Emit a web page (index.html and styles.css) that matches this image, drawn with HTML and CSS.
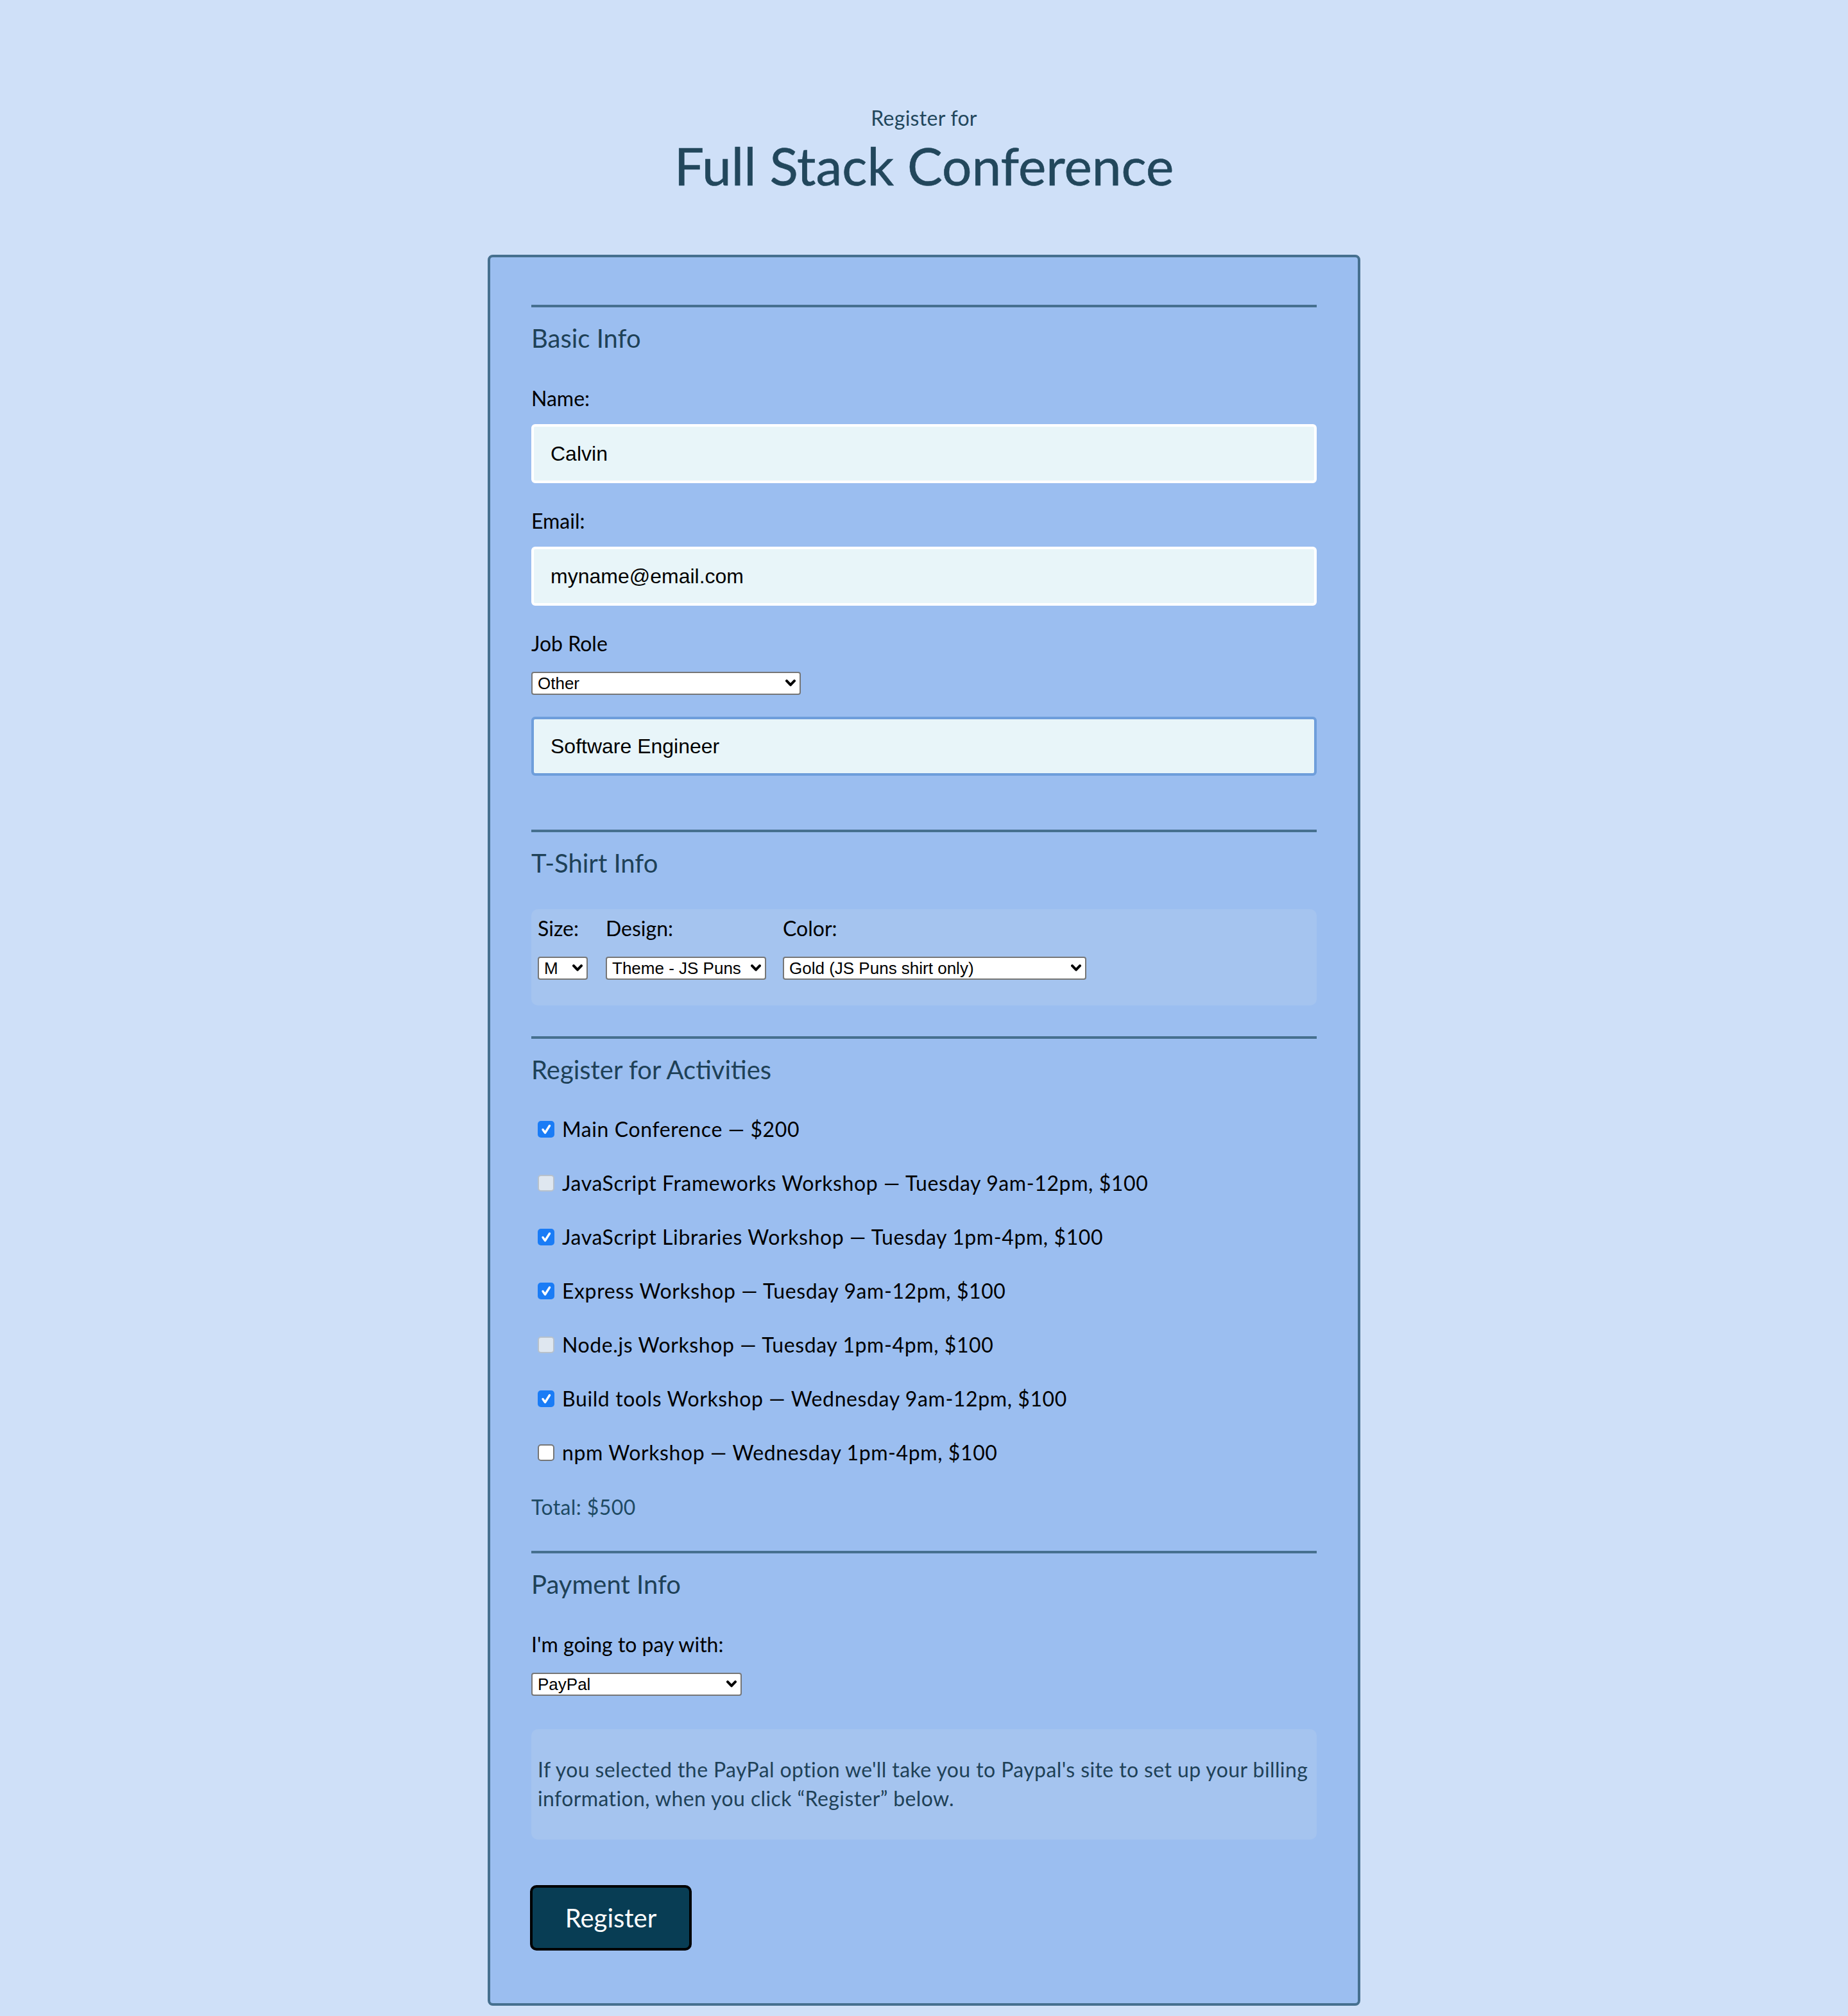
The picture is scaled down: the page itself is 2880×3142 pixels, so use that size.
FILE: index.html
```html
<!DOCTYPE html>
<html lang="en">
<head>
<meta charset="utf-8">
<title>Full Stack Conference</title>
<link rel="stylesheet" href="styles.css">
</head>
<body>
<header class="page-header">
  <p class="kicker">Register for</p>
  <h1 class="title">Full Stack Conference</h1>
</header>

<form class="reg-form">
  <section class="section basic-section">
    <h2 class="section-title">Basic Info</h2>
    <label class="field-label">Name:</label>
    <input class="text-input" type="text" value="Calvin">
    <label class="field-label gap-top">Email:</label>
    <input class="text-input" type="text" value="myname@email.com">
    <label class="field-label gap-top">Job Role</label>
    <div class="select-row">
      <span class="select-wrap w-job">
        <select class="select"><option>Other</option></select>
        <svg class="chev" viewBox="0 0 12 8"><path d="M1.5 1.5 L6 6.2 L10.5 1.5" fill="none" stroke="#000" stroke-width="3" stroke-linecap="round" stroke-linejoin="round"/></svg>
      </span>
    </div>
    <input class="text-input focused" type="text" value="Software Engineer">
  </section>

  <section class="section">
    <h2 class="section-title">T-Shirt Info</h2>
    <div class="panel shirt-panel">
      <div class="shirt-col">
        <label class="field-label">Size:</label>
        <span class="select-wrap w-size">
          <select class="select"><option>M</option></select>
          <svg class="chev" viewBox="0 0 12 8"><path d="M1.5 1.5 L6 6.2 L10.5 1.5" fill="none" stroke="#000" stroke-width="3" stroke-linecap="round" stroke-linejoin="round"/></svg>
        </span>
      </div>
      <div class="shirt-col">
        <label class="field-label">Design:</label>
        <span class="select-wrap w-design">
          <select class="select"><option>Theme - JS Puns</option></select>
          <svg class="chev" viewBox="0 0 12 8"><path d="M1.5 1.5 L6 6.2 L10.5 1.5" fill="none" stroke="#000" stroke-width="3" stroke-linecap="round" stroke-linejoin="round"/></svg>
        </span>
      </div>
      <div class="shirt-col">
        <label class="field-label">Color:</label>
        <span class="select-wrap w-color">
          <select class="select"><option>Gold (JS Puns shirt only)</option></select>
          <svg class="chev" viewBox="0 0 12 8"><path d="M1.5 1.5 L6 6.2 L10.5 1.5" fill="none" stroke="#000" stroke-width="3" stroke-linecap="round" stroke-linejoin="round"/></svg>
        </span>
      </div>
    </div>
  </section>

  <section class="section">
    <h2 class="section-title">Register for Activities</h2>
    <ul class="activities">
      <li class="activity"><span class="cb checked"><svg viewBox="0 0 26 26"><path d="M8 13.5 L11.5 18.5 L18.5 7.5" fill="none" stroke="#fff" stroke-width="3.4" stroke-linecap="round" stroke-linejoin="round"/></svg></span>Main Conference — $200</li>
      <li class="activity"><span class="cb disabled"></span>JavaScript Frameworks Workshop — Tuesday 9am-12pm, $100</li>
      <li class="activity"><span class="cb checked"><svg viewBox="0 0 26 26"><path d="M8 13.5 L11.5 18.5 L18.5 7.5" fill="none" stroke="#fff" stroke-width="3.4" stroke-linecap="round" stroke-linejoin="round"/></svg></span>JavaScript Libraries Workshop — Tuesday 1pm-4pm, $100</li>
      <li class="activity"><span class="cb checked"><svg viewBox="0 0 26 26"><path d="M8 13.5 L11.5 18.5 L18.5 7.5" fill="none" stroke="#fff" stroke-width="3.4" stroke-linecap="round" stroke-linejoin="round"/></svg></span>Express Workshop — Tuesday 9am-12pm, $100</li>
      <li class="activity"><span class="cb disabled"></span>Node.js Workshop — Tuesday 1pm-4pm, $100</li>
      <li class="activity"><span class="cb checked"><svg viewBox="0 0 26 26"><path d="M8 13.5 L11.5 18.5 L18.5 7.5" fill="none" stroke="#fff" stroke-width="3.4" stroke-linecap="round" stroke-linejoin="round"/></svg></span>Build tools Workshop — Wednesday 9am-12pm, $100</li>
      <li class="activity"><span class="cb"></span>npm Workshop — Wednesday 1pm-4pm, $100</li>
    </ul>
    <p class="total">Total: $500</p>
  </section>

  <section class="section">
    <h2 class="section-title">Payment Info</h2>
    <label class="field-label">I'm going to pay with:</label>
    <div class="select-row">
      <span class="select-wrap w-pay">
        <select class="select"><option>PayPal</option></select>
        <svg class="chev" viewBox="0 0 12 8"><path d="M1.5 1.5 L6 6.2 L10.5 1.5" fill="none" stroke="#000" stroke-width="3" stroke-linecap="round" stroke-linejoin="round"/></svg>
      </span>
    </div>
    <div class="panel paypal-panel">
      <p class="paypal-text">If you selected the PayPal option we'll take you to Paypal's site to set up your billing information, when you click “Register” below.</p>
    </div>
  </section>

  <button class="register-btn" type="button">Register</button>
</form>
</body>
</html>
```

FILE: styles.css
```css
* { box-sizing: border-box; }

html, body {
  margin: 0;
  padding: 0;
}

body {
  background: #cfe0f8;
  font-family: Lato, "Open Sans", sans-serif;
  color: #000;
  padding-bottom: 20px;
}

.page-header {
  text-align: center;
  padding-top: 164px;
  color: #22475c;
}

.kicker {
  margin: 0;
  font-size: 32px;
  line-height: 40px;
  letter-spacing: 0.3px;
}

.title {
  margin: 5px 0 0;
  font-size: 82px;
  line-height: 96px;
  font-weight: 400;
  -webkit-text-stroke: 0.6px #22475c;
}

.reg-form {
  width: 1360px;
  margin: 92px auto 0;
  background: #9bbef0;
  border: 4px solid #46708f;
  border-radius: 8px;
  padding: 74px 64px 82px;
}

.section {
  border-top: 4px solid #46708f;
  padding-top: 24px;
  padding-bottom: 48px;
}

.basic-section {
  padding-bottom: 84px;
}

.section-title {
  margin: 0;
  font-size: 40px;
  line-height: 48px;
  font-weight: 400;
  color: #1e4157;
}

.field-label {
  display: block;
  font-size: 32px;
  line-height: 40px;
  margin-top: 50px;
  margin-bottom: 20px;
}

.field-label.gap-top {
  margin-top: 39px;
}

.text-input {
  display: block;
  width: 100%;
  height: 92px;
  margin: 0;
  padding: 0 26px;
  border: 4px solid #fff;
  border-radius: 6px;
  background: #e8f5f9;
  font-family: "Liberation Sans", Arial, sans-serif;
  font-size: 32px;
  color: #000;
  outline: none;
}

.text-input.focused {
  border-color: #6e9edb;
  margin-top: 34px;
}

.select-row {
  display: flex;
}

.field-label + .select-row {
  margin-top: -20px;
  padding-top: 24px;
}

.select-wrap {
  position: relative;
  display: inline-block;
  height: 36px;
}

.select {
  -webkit-appearance: none;
  appearance: none;
  width: 100%;
  height: 36px;
  margin: 0;
  padding: 0 30px 0 8px;
  background: #fff;
  border: 2px solid #767676;
  border-radius: 4px;
  font-family: "Liberation Sans", Arial, sans-serif;
  font-size: 26px;
  line-height: 32px;
  color: #000;
}

.chev {
  position: absolute;
  right: 8px;
  top: 12px;
  width: 16px;
  height: 11px;
  pointer-events: none;
}

.w-job { width: 420px; }
.w-size { width: 78px; }
.w-design { width: 250px; }
.w-color { width: 473px; }
.w-pay { width: 328px; }

.panel {
  background: #a5c4ef;
  border-radius: 10px;
}

.shirt-panel {
  display: flex;
  gap: 28px;
  margin-top: 48px;
  padding: 10px 10px 40px;
}

.shirt-col .field-label {
  margin: 0 0 24px;
}

.shirt-col:nth-child(2) { margin-right: -2px; }

.activities {
  list-style: none;
  margin: 49px 0 0;
  padding: 0 0 0 10px;
}

.activity {
  display: flex;
  align-items: center;
  font-size: 32px;
  line-height: 40px;
  letter-spacing: 0.6px;
  margin-bottom: 44px;
}

.activity:last-child { margin-bottom: 0; }

.cb {
  flex: none;
  display: inline-flex;
  width: 26px;
  height: 26px;
  margin-right: 12px;
  border: 2px solid #767676;
  border-radius: 5px;
  background: #fff;
}

.cb.checked {
  border: none;
  background: #1a7cf6;
}

.cb.checked svg {
  width: 26px;
  height: 26px;
}

.cb.disabled {
  background: #dfe7f0;
  border-color: #b7c1cc;
}

.total {
  margin: 45px 0 0;
  font-size: 32px;
  line-height: 40px;
  letter-spacing: 0.4px;
  color: #1e4a63;
}

.section:last-of-type {
  padding-bottom: 0;
}

.paypal-panel {
  margin-top: 52px;
  padding: 40px 10px 42px;
}

.paypal-text {
  margin: 0;
  font-size: 32px;
  line-height: 45px;
  letter-spacing: 0.4px;
  color: #1e4157;
}

.register-btn {
  display: block;
  margin: 71px 0 0 -2px;
  width: 252px;
  height: 102px;
  background: #083d54;
  border: 4px solid #000;
  border-radius: 10px;
  color: #fff;
  font-family: Lato, "Open Sans", sans-serif;
  font-size: 40px;
}
```
